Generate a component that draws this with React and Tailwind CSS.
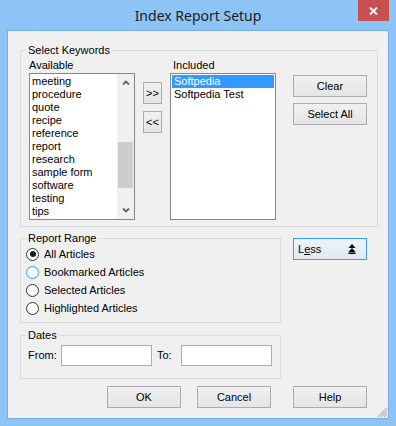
import React from "react"

const available = ["meeting", "procedure", "quote", "recipe", "reference", "report", "research", "sample form", "software", "testing", "tips"]
const included = ["Softpedia", "Softpedia Test"]

function Button({ children, w = "w-[74px]", className = "" }) {
  return (
    <button className={"h-[22px] border border-[#acacac] bg-gradient-to-b from-[#f0f0f0] to-[#e5e5e5] text-[11px] leading-none text-black flex items-center justify-center " + w + " " + className}>
      {children}
    </button>
  )
}

function Radio({ label, checked, hover }) {
  return (
    <div className="flex h-[18px] items-center gap-[5px]">
      <div className={"flex h-[13px] w-[13px] items-center justify-center rounded-full border " + (hover ? "border-[#3c9cf5] bg-[#f4faff]" : "border-[#333] bg-white")}>
        {checked && <div className="h-[6px] w-[6px] rounded-full bg-[#1a1a1a]" />}
      </div>
      <span>{label}</span>
    </div>
  )
}

function Chevron({ up }) {
  return (
    <svg width="8" height="5" viewBox="0 0 8 5">
      <path d={up ? "M1 4.5 L4 1.5 L7 4.5" : "M1 0.5 L4 3.5 L7 0.5"} fill="none" stroke="#606060" strokeWidth="1.8" />
    </svg>
  )
}

export default function App() {
  return (
    <div className="flex h-[426px] w-[396px] flex-col bg-[#8cc4f6] font-['Liberation_Sans',Arial,sans-serif] text-[11px] leading-[13px] text-black">
      {/* Title bar */}
      <div className="grid h-[30px] shrink-0 grid-cols-[1fr_auto_1fr]">
        <div />
        <div className="self-center pt-[1px] font-['Noto_Sans',sans-serif] text-[14px] leading-[20px] text-[#1e1e1e]">Index Report Setup</div>
        <div className="flex justify-end pr-[7px]">
          <button className="flex h-[21px] w-[31px] items-center justify-center bg-[#c75050]">
            <svg width="9" height="8" viewBox="0 0 9 8">
              <path d="M1 0.5 L8 7.5 M8 0.5 L1 7.5" stroke="white" strokeWidth="1.8" />
            </svg>
          </button>
        </div>
      </div>

      {/* Client area */}
      <div className="relative mx-[7px] mb-[7px] flex-1 border border-[#74aee4] bg-[#f0f0f0] pl-[12px] pt-[13px]">
        <fieldset className="w-[358px] border border-[#dcdcdc] pb-[6px] pl-[8px]">
          <legend className="-ml-[3px] px-[2px] leading-[13px]">Select Keywords</legend>
          <div className="flex items-start pt-[2px]">
            <div className="flex w-[106px] flex-col">
              <div className="mb-[1px] h-[13px]">Available</div>
              <div className="flex h-[147px] border border-[#828790] bg-white">
                <div className="flex-1 pl-[2px] pt-[1px]">
                  {available.map((k) => (
                    <div key={k} className="h-[13px] whitespace-nowrap">{k}</div>
                  ))}
                </div>
                <div className="flex w-[17px] flex-col bg-[#f0f0f0]">
                  <div className="flex h-[17px] items-center justify-center"><Chevron up /></div>
                  <div className="flex-1 px-[1px]">
                    <div className="mt-[51px] h-[46px] bg-[#cdcdcd]" />
                  </div>
                  <div className="flex h-[17px] items-center justify-center"><Chevron /></div>
                </div>
              </div>
            </div>

            <div className="ml-[8px] mt-[23px] flex flex-col gap-[7px]">
              <Button w="w-[19px]">&gt;&gt;</Button>
              <Button w="w-[19px]">&lt;&lt;</Button>
            </div>

            <div className="ml-[8px] flex w-[106px] flex-col">
              <div className="mb-[1px] h-[13px] pl-[3px]">Included</div>
              <div className="h-[147px] border border-[#828790] bg-white p-[1px]">
                {included.map((k, i) => (
                  <div key={k} className={"h-[13px] whitespace-nowrap pl-[2px] " + (i === 0 ? "bg-[#3399ff] text-white" : "")}>{k}</div>
                ))}
              </div>
            </div>

            <div className="ml-[17px] mt-[16px] flex flex-col gap-[6px]">
              <Button>Clear</Button>
              <Button>Select All</Button>
            </div>
          </div>
        </fieldset>

        <div className="mt-[5px] flex items-start">
          <fieldset className="w-[261px] border border-[#dcdcdc] pb-[5px] pl-[5px]">
            <legend className="px-[2px] leading-[13px]">Report Range</legend>
            <Radio label="All Articles" checked />
            <Radio label="Bookmarked Articles" hover />
            <Radio label="Selected Articles" />
            <Radio label="Highlighted Articles" />
          </fieldset>
          <button className="ml-[12px] mt-[6px] flex h-[22px] w-[74px] items-center justify-between border border-[#3c9cf5] bg-gradient-to-b from-[#ecf4fc] to-[#e2e8ee] pl-[4px] pr-[10px] text-[11px]">
            <span>L<span className="underline">e</span>ss</span>
            <svg width="8" height="10" viewBox="0 0 8 10">
              <path d="M4 0 L7.5 4 L0.5 4 Z M4 4 L7.5 8 L0.5 8 Z" fill="black" />
              <rect x="0.5" y="8.5" width="7" height="1.5" fill="black" />
            </svg>
          </button>
        </div>

        <fieldset className="mt-[6px] w-[261px] border border-[#dcdcdc] pb-[12px] pl-[7px]">
          <legend className="-ml-[2px] px-[2px] leading-[13px]">Dates</legend>
          <div className="flex items-center pt-[3px]">
            <span className="w-[33px]">From:</span>
            <input className="h-[21px] w-[91px] border border-[#abadb3] bg-white outline-none" />
            <span className="ml-[5px] w-[24px]">To:</span>
            <input className="h-[21px] w-[91px] border border-[#abadb3] bg-white outline-none" />
          </div>
        </fieldset>

        <div className="mt-[7px] flex justify-end pr-[21px]">
          <Button>OK</Button>
          <Button className="ml-[16px]">Cancel</Button>
          <Button className="ml-[22px]">Help</Button>
        </div>

        {/* Size grip */}
        <svg className="absolute bottom-0 right-0" width="12" height="12" viewBox="0 0 12 12">
          <path d="M11 2 L2 11 M11 5 L5 11 M11 8 L8 11" stroke="#b4b4b4" strokeWidth="1.2" />
        </svg>
      </div>
    </div>
  )
}
